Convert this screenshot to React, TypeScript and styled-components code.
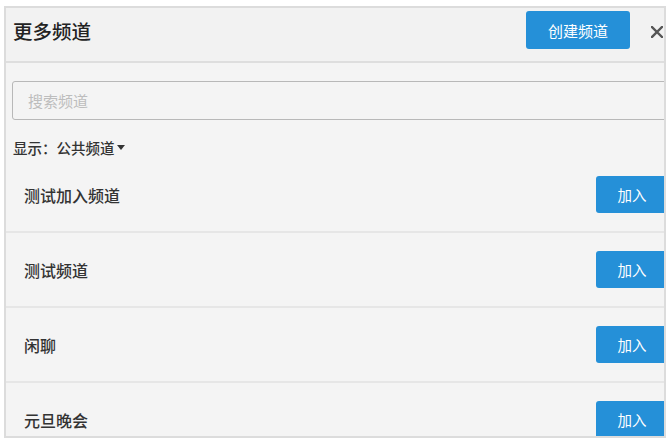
import React from "react";
import styled, { createGlobalStyle } from "styled-components";

const GlobalStyle = createGlobalStyle`
  html, body {
    margin: 0;
    padding: 0;
    background: #ffffff;
  }
  body {
    font-family: "Noto Sans CJK SC", "Noto Sans", sans-serif;
    color: #333;
  }
`;

const Page = styled.div`
  padding: 6px 0 0 4px;
`;

const Panel = styled.div`
  box-sizing: border-box;
  width: 662px;
  height: 432px;
  border: 2px solid #dcdcdc;
  background: #f4f4f4;
  overflow: hidden;
  display: flex;
  flex-direction: column;
`;

const Header = styled.header`
  box-sizing: border-box;
  height: 55px;
  flex-shrink: 0;
  display: flex;
  align-items: flex-start;
  padding: 3px 0 0 7px;
  background: #f2f2f2;
  border-bottom: 2px solid #dedede;
`;

const Title = styled.h1`
  flex: 1;
  margin: 0;
  font-size: 19.5px;
  font-weight: 500;
  line-height: 40px;
  color: #222;
`;

const CreateButton = styled.button`
  width: 104px;
  height: 38px;
  border: none;
  border-radius: 3px;
  background: #2590d8;
  color: #fff;
  font-family: inherit;
  font-size: 15px;
  padding: 0;
`;

const CloseButton = styled.button`
  display: flex;
  align-items: center;
  justify-content: center;
  width: 14px;
  height: 14px;
  margin: 14px 0 0 20px;
  padding: 0;
  border: none;
  background: none;
`;

const Body = styled.div`
  padding: 18px 0 0 6px;
`;

const SearchInput = styled.input`
  box-sizing: border-box;
  display: block;
  width: calc(100% + 10px);
  height: 39px;
  border: 1px solid #b8b8b8;
  border-radius: 3px;
  background: #f4f4f4;
  padding: 0 15px;
  font-family: inherit;
  font-size: 15px;
  color: #333;
  outline: none;

  &::placeholder {
    color: #bdbdbd;
  }
`;

const Filter = styled.div`
  display: flex;
  align-items: center;
  margin-top: 16px;
  padding-left: 1px;
  height: 22px;
  font-size: 14.5px;
  font-weight: 500;
  color: #333;
`;

const Caret = styled.span`
  width: 0;
  height: 0;
  margin-left: 2px;
  border-left: 4px solid transparent;
  border-right: 4px solid transparent;
  border-top: 5px solid #333;
`;

const List = styled.ul`
  list-style: none;
  margin: 0;
  padding: 0;
`;

const Row = styled.li`
  box-sizing: border-box;
  height: 75px;
  display: flex;
  align-items: center;
  justify-content: space-between;
  padding-left: 18px;
  border-bottom: 2px solid #e6e6e6;
`;

const ChannelName = styled.span`
  font-size: 16px;
  font-weight: 500;
  color: #333;
`;

const JoinButton = styled.button`
  width: 72px;
  height: 37px;
  margin-right: -4px;
  border: none;
  border-radius: 3px;
  background: #2590d8;
  color: #fff;
  font-family: inherit;
  font-size: 14.5px;
  padding: 0;
`;

const channels = ["测试加入频道", "测试频道", "闲聊", "元旦晚会"];

const App = () => {
  return (
    <Page>
      <GlobalStyle />
      <Panel>
        <Header>
          <Title>更多频道</Title>
          <CreateButton>创建频道</CreateButton>
          <CloseButton aria-label="关闭">
            <svg width="12" height="12" viewBox="0 0 12 12">
              <path
                d="M1 1 L11 11 M11 1 L1 11"
                stroke="#555"
                strokeWidth="2.4"
                strokeLinecap="square"
              />
            </svg>
          </CloseButton>
        </Header>
        <Body>
          <SearchInput placeholder="搜索频道" />
          <Filter>
            显示：公共频道
            <Caret />
          </Filter>
        </Body>
        <List>
          {channels.map((name) => (
            <Row key={name}>
              <ChannelName>{name}</ChannelName>
              <JoinButton>加入</JoinButton>
            </Row>
          ))}
        </List>
      </Panel>
    </Page>
  );
};

export default App;
